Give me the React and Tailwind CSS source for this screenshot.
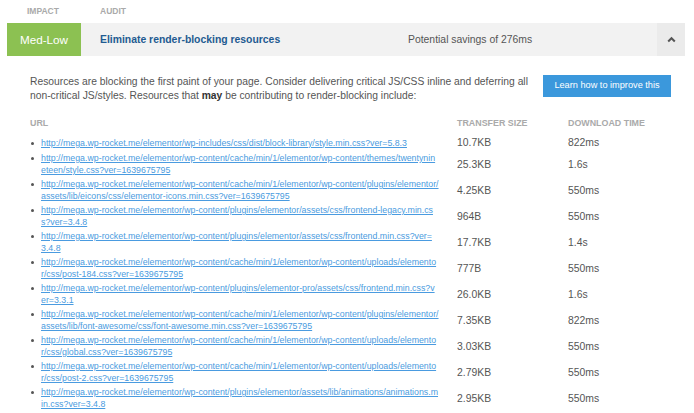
const BASE = "http://mega.wp-rocket.me/elementor/wp-content/";
const CACHE = BASE + "cache/min/1/elementor/wp-content/";

// url split the same way the report wraps it
const ROWS = [
  [["http://mega.wp-rocket.me/elementor/wp-includes/css/dist/block-library/style.min.css?ver=5.8.3"], "10.7KB", "822ms"],
  [[CACHE + "themes/twentynin", "eteen/style.css?ver=1639675795"], "25.3KB", "1.6s"],
  [[CACHE + "plugins/elementor/", "assets/lib/eicons/css/elementor-icons.min.css?ver=1639675795"], "4.25KB", "550ms"],
  [[BASE + "plugins/elementor/assets/css/frontend-legacy.min.cs", "s?ver=3.4.8"], "964B", "550ms"],
  [[BASE + "plugins/elementor/assets/css/frontend.min.css?ver=", "3.4.8"], "17.7KB", "1.4s"],
  [[CACHE + "uploads/elemento", "r/css/post-184.css?ver=1639675795"], "777B", "550ms"],
  [[BASE + "plugins/elementor-pro/assets/css/frontend.min.css?v", "er=3.3.1"], "26.0KB", "1.6s"],
  [[CACHE + "plugins/elementor/", "assets/lib/font-awesome/css/font-awesome.min.css?ver=1639675795"], "7.35KB", "822ms"],
  [[CACHE + "uploads/elemento", "r/css/global.css?ver=1639675795"], "3.03KB", "550ms"],
  [[CACHE + "uploads/elemento", "r/css/post-2.css?ver=1639675795"], "2.79KB", "550ms"],
  [[BASE + "plugins/elementor/assets/lib/animations/animations.m", "in.css?ver=3.4.8"], "2.95KB", "550ms"],
];

export default function App() {
  return (
    <div className="w-[694px] h-[413px] overflow-hidden bg-white font-['Liberation_Sans',Arial,sans-serif]">
      {/* column labels */}
      <div className="flex h-[23px] items-center text-[8.5px] font-bold text-[#aaa]">
        <div className="w-[100px] pl-[27px]">IMPACT</div>
        <div>AUDIT</div>
      </div>

      {/* audit bar */}
      <div className="ml-[7px] w-[678px] h-[33px] flex items-center bg-[#f2f2f2]">
        <div className="w-[74px] h-full bg-[#8cc152] text-white text-[11.7px] flex items-center justify-center">
          Med-Low
        </div>
        <div className="w-[327px] pl-[19px] text-[10.4px] font-bold text-[#1f5b91]">
          Eliminate render-blocking resources
        </div>
        <div className="flex-1 text-[10.4px] text-[#555]">Potential savings of 276ms</div>
        <div className="w-[28px] h-full bg-[#ebebeb] flex items-center justify-center">
          <svg width="9" height="7" viewBox="0 0 9 7">
            <path d="M1.2 5.5 L4.5 2.2 L7.8 5.5" fill="none" stroke="#555" strokeWidth="2" />
          </svg>
        </div>
      </div>

      {/* description */}
      <div className="flex pl-[30px] pt-[19px] pr-[23px]">
        <p className="w-[500px] text-[10.3px] leading-[14px] text-[#555]">
          Resources are blocking the first paint of your page. Consider delivering critical JS/CSS inline and deferring all
          non-critical JS/styles. Resources that <b className="text-[#333]">may</b> be contributing to render-blocking include:
        </p>
        <button className="ml-[13px] w-[128px] h-[22px] bg-[#3b98dc] text-white text-[9.2px] shrink-0">
          Learn how to improve this
        </button>
      </div>

      {/* table */}
      <table className="ml-[30px] mt-[15px] border-collapse">
        <thead>
          <tr className="text-[8.9px] leading-[11px] text-[#aaa] text-left">
            <th className="w-[427px] pb-[5px] font-bold">URL</th>
            <th className="w-[111px] pb-[5px] font-bold">TRANSFER SIZE</th>
            <th className="pb-[5px] font-bold">DOWNLOAD TIME</th>
          </tr>
        </thead>
        <tbody>
          {ROWS.map(([lines, size, time]) => (
            <tr key={lines.join("")} className="align-middle">
              <td className="py-[1px]">
                <div className="flex items-start">
                  <span className="mt-[5px] ml-[1px] mr-[7px] w-[3px] h-[3px] rounded-full bg-[#555] shrink-0" />
                  <a href="#" className="block text-[8.8px] leading-[12px] text-[#4a9be0] underline">
                    {lines.map((l) => (
                      <span key={l} className="block whitespace-nowrap">{l}</span>
                    ))}
                  </a>
                </div>
              </td>
              <td className="text-[10.4px] leading-[17px] text-[#555]">{size}</td>
              <td className="text-[10.4px] leading-[17px] text-[#555]">{time}</td>
            </tr>
          ))}
        </tbody>
      </table>
    </div>
  );
}
